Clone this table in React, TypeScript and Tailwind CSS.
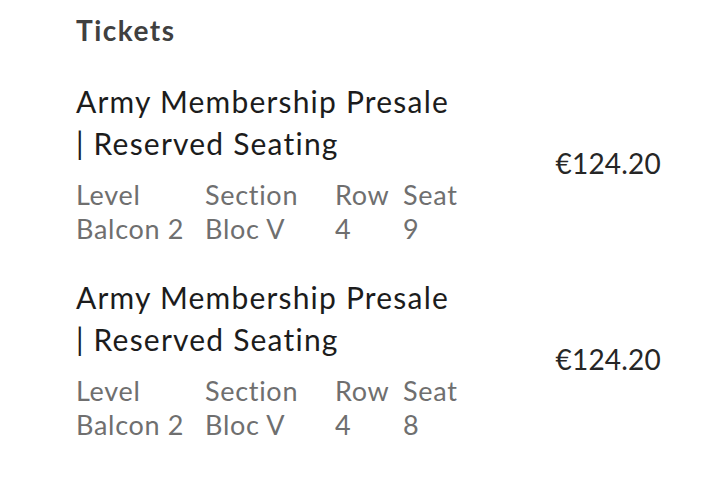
const tickets = [
  { level: 'Balcon 2', section: 'Bloc V', row: '4', seat: '9', price: '€124.20' },
  { level: 'Balcon 2', section: 'Bloc V', row: '4', seat: '8', price: '€124.20' },
]

const TicketRow = ({ t }: { t: (typeof tickets)[number] }) => (
  <div className="flex items-center justify-between">
    <div>
      <div className="text-[30px] leading-[42px] tracking-[1.2px] text-[#1c1c1c]">
        Army Membership Presale
        <br />| Reserved Seating
      </div>
      <div className="mt-[14px] grid grid-cols-[129px_130px_68px_60px] text-[27px] leading-[34px] tracking-[0.7px] text-[#6f6f6f]">
        <span>Level</span>
        <span>Section</span>
        <span>Row</span>
        <span>Seat</span>
        <span>{t.level}</span>
        <span>{t.section}</span>
        <span>{t.row}</span>
        <span>{t.seat}</span>
      </div>
    </div>
    <div className="text-[28px] tracking-[0.2px] text-[#262626]">{t.price}</div>
  </div>
)

export default function App() {
  return (
    <div
      className="h-[487px] w-[712px] overflow-hidden bg-white pl-[76px] pr-[51px]"
      style={{ fontFamily: 'Lato, "Noto Sans", sans-serif' }}
    >
      <h2 className="pt-[10px] text-[28px] font-bold leading-[40px] tracking-[1.5px] text-[#404040]">Tickets</h2>
      <div className="mt-[30px] flex flex-col gap-[30px]">
        {tickets.map((t, i) => (
          <TicketRow key={i} t={t} />
        ))}
      </div>
    </div>
  )
}
